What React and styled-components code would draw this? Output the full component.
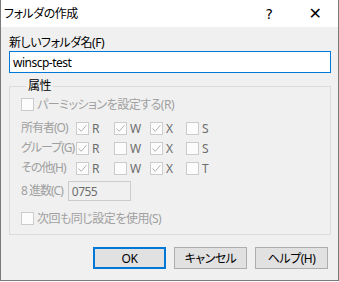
import React from "react";
import styled, { createGlobalStyle } from "styled-components";

const GlobalStyle = createGlobalStyle`
  html, body {
    margin: 0;
    padding: 0;
    background: #fafafa;
  }
  body {
    font-family: "Segoe UI", "Noto Sans", "Noto Sans CJK JP", sans-serif;
    font-size: 12px;
    font-feature-settings: "palt";
    letter-spacing: -0.5px;
  }
`;

const Window = styled.div`
  width: 339px;
  height: 281px;
  box-sizing: border-box;
  border: 1px solid #7a7a7a;
  border-top: none;
  background: #f0f0f0;
  display: flex;
  flex-direction: column;
  color: #000;
`;

const TitleBar = styled.div`
  height: 27px;
  background: #fff;
  display: flex;
  align-items: center;
`;

const Title = styled.div`
  flex: 1;
  padding-left: 3px;
  font-size: 12px;
  line-height: 16px;
`;

const TitleButton = styled.div`
  width: 46px;
  height: 27px;
  display: flex;
  align-items: center;
  justify-content: center;
  font-size: ${(p) => p.$size || 14}px;
  font-family: "Segoe UI", "DejaVu Sans", sans-serif;
`;

const Body = styled.div`
  display: flex;
  flex-direction: column;
  padding: 8px 7px 0 8px;
`;

const Label = styled.label`
  line-height: 16px;
  color: #000;
`;

const TextField = styled.div`
  height: 22px;
  box-sizing: border-box;
  border: 1px solid #0078d7;
  background: #fff;
  display: flex;
  align-items: center;
  padding-left: 3px;
  color: #000;
`;

const Group = styled.fieldset`
  margin: 5px 0 0 0;
  padding: 2px 0 0 11px;
  border: 1px solid #dcdcdc;
  height: 157px;
  box-sizing: border-box;
  display: flex;
  flex-direction: column;
`;

const Legend = styled.legend`
  padding: 0 2px;
  margin-left: 5px;
  line-height: 16px;
  color: #000;
`;

const CheckRow = styled.div`
  display: flex;
  align-items: center;
  height: 16px;
  gap: 3px;
  margin-top: ${(p) => p.$top || 0}px;
  color: #a0a0a0;
`;

const Box = styled.span`
  width: 13px;
  height: 13px;
  box-sizing: border-box;
  border: 1px solid #cccccc;
  background: #fcfcfc;
  display: inline-flex;
  align-items: center;
  justify-content: center;
  flex-shrink: 0;
`;

const PermGrid = styled.div`
  display: grid;
  grid-template-columns: 55px 38px 36px 36px auto;
  grid-auto-rows: 20px;
  margin-top: 6px;
  align-items: center;
`;

const RowLabel = styled.span`
  color: #a0a0a0;
  line-height: 16px;
  white-space: nowrap;
  letter-spacing: -1px;
`;

const Perm = styled.span`
  display: flex;
  align-items: center;
  gap: 3px;
  color: #6d6d6d;
`;

const OctalRow = styled.div`
  display: flex;
  align-items: center;
  gap: 5px;
  margin-top: 3px;
  height: 20px;
`;

const OctalInput = styled.div`
  width: 63px;
  height: 20px;
  box-sizing: border-box;
  border: 1px solid #cccccc;
  background: #f0f0f0;
  color: #6d6d6d;
  display: flex;
  align-items: center;
  padding-left: 3px;
`;

const Buttons = styled.div`
  display: flex;
  justify-content: flex-end;
  gap: 8px;
  margin-top: 12px;
  padding-right: 3px;
`;

const Button = styled.div`
  width: 73px;
  height: 22px;
  box-sizing: border-box;
  background: #e1e1e1;
  border: ${(p) => (p.$default ? "2px solid #0078d7" : "1px solid #adadad")};
  display: flex;
  align-items: center;
  justify-content: center;
  color: #000;
`;

const Check = () => (
  <svg width="11" height="11" viewBox="0 0 11 11">
    <path d="M1.5 5.5 L4.2 8.3 L9.5 2.2" fill="none" stroke="#b4b4b4" strokeWidth="1" />
  </svg>
);

const CheckBox = ({ checked }) => <Box>{checked && <Check />}</Box>;

const perms = [
  { label: "所有者(O)", bits: [["R", true], ["W", true], ["X", true], ["S", false]] },
  { label: "グループ(G)", bits: [["R", true], ["W", false], ["X", true], ["S", false]] },
  { label: "その他(H)", bits: [["R", true], ["W", false], ["X", true], ["T", false]] },
];

export default function App() {
  return (
    <>
      <GlobalStyle />
      <Window>
        <TitleBar>
          <Title>フォルダの作成</Title>
          <TitleButton>?</TitleButton>
          <TitleButton $size={16}>✕</TitleButton>
        </TitleBar>
        <Body>
          <Label>新しいフォルダ名(F)</Label>
          <TextField>winscp-test</TextField>
          <Group>
            <Legend>属性</Legend>
            <CheckRow>
              <CheckBox />
              パーミッションを設定する(R)
            </CheckRow>
            <PermGrid>
              {perms.map((row) => (
                <React.Fragment key={row.label}>
                  <RowLabel>{row.label}</RowLabel>
                  {row.bits.map(([name, on]) => (
                    <Perm key={name}>
                      <CheckBox checked={on} />
                      {name}
                    </Perm>
                  ))}
                </React.Fragment>
              ))}
            </PermGrid>
            <OctalRow>
              <RowLabel>8 進数(C)</RowLabel>
              <OctalInput>0755</OctalInput>
            </OctalRow>
            <CheckRow $top={9}>
              <CheckBox />
              次回も同じ設定を使用(S)
            </CheckRow>
          </Group>
          <Buttons>
            <Button $default>OK</Button>
            <Button>キャンセル</Button>
            <Button>ヘルプ(H)</Button>
          </Buttons>
        </Body>
      </Window>
    </>
  );
}
